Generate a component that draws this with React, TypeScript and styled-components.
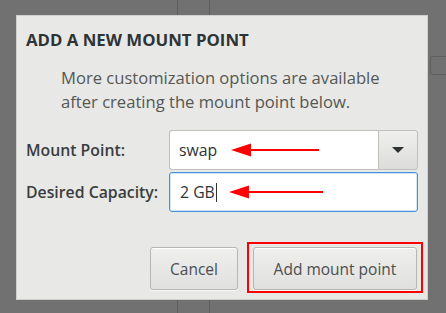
import React from "react";
import styled, { createGlobalStyle } from "styled-components";

const Global = createGlobalStyle`
  html, body { margin: 0; padding: 0; }
  body { width: 446px; height: 313px; overflow: hidden; font-family: "Open Sans", "DejaVu Sans", sans-serif; }
`;

const Backdrop = styled.div`
  position: relative;
  width: 446px;
  height: 313px;
  box-sizing: border-box;
  padding: 15px 18px 13px 16px;
  background-color: #717171;
  background-image:
    linear-gradient(#5f5f5f, #5f5f5f),
    linear-gradient(#5f5f5f, #5f5f5f);
  background-size: 1px 100%, 1px 100%;
  background-position: 177px 0, 209px 0;
  background-repeat: no-repeat;
  &::after {
    content: "";
    position: absolute;
    left: 430px;
    top: 56px;
    width: 30px;
    height: 17px;
    border: 1px solid #5e5e5e;
    border-radius: 3px;
  }
`;

const Dialog = styled.div`
  position: relative;
  z-index: 1;
  box-sizing: border-box;
  width: 412px;
  height: 285px;
  background: #e8e8e7;
  border: 1px solid #cfcfcd;
  padding: 12px 9px 0 9px;
  display: flex;
  flex-direction: column;
`;

const Title = styled.h1`
  margin: 0;
  font-family: "Open Sans", sans-serif;
  font-weight: 700;
  font-size: 16.8px;
  line-height: 24px;
  color: #2e3436;
`;

const Description = styled.p`
  margin: 14px 0 0 0;
  padding-left: 35px;
  font-size: 16.6px;
  line-height: 24px;
  color: #555753;
`;

const Form = styled.div`
  display: grid;
  grid-template-columns: 143px 1fr;
  row-gap: 2px;
  margin-top: 16px;
  align-items: center;
`;

const Label = styled.label`
  font-size: 15.8px;
  font-weight: 600;
  color: #3a3d3e;
`;

const Field = styled.div`
  position: relative;
  height: 40px;
  display: flex;
`;

const ComboEntry = styled.div`
  flex: 1;
  box-sizing: border-box;
  background: #ffffff;
  border: 1px solid #bfbfbc;
  border-right: none;
  border-radius: 3px 0 0 3px;
  padding-left: 9px;
  display: flex;
  align-items: center;
  font-size: 15.8px;
  color: #2e3436;
`;

const ComboButton = styled.div`
  width: 40px;
  box-sizing: border-box;
  border: 1px solid #bfbfbc;
  border-radius: 0 3px 3px 0;
  background: linear-gradient(#efefed, #dcdcda);
  display: flex;
  align-items: center;
  justify-content: center;
`;

const Entry = styled.div`
  flex: 1;
  box-sizing: border-box;
  background: #ffffff;
  border: 1px solid #4a90d9;
  box-shadow: inset 0 0 0 1px rgba(74, 144, 217, 0.25);
  border-radius: 3px;
  padding-left: 10px;
  display: flex;
  align-items: center;
  font-size: 15.8px;
  color: #2e3436;
`;

const Caret = styled.span`
  display: inline-block;
  width: 1px;
  height: 19px;
  background: #2e3436;
  margin-left: 1px;
`;

const Arrow = styled.svg`
  position: absolute;
  top: 12px;
  pointer-events: none;
`;

const Actions = styled.div`
  margin-top: auto;
  margin-bottom: 6px;
  display: flex;
  justify-content: flex-end;
  align-items: flex-start;
  gap: 9px;
`;

const Highlight = styled.div`
  border: 2px solid #ff0000;
  padding: 3px 4px 1px 4px;
  margin-right: -5px;
`;

const Button = styled.button<{ $w: number }>`
  width: ${(p) => p.$w}px;
  height: 43px;
  margin-top: ${(p) => (p.$w < 100 ? 5 : 0)}px;
  box-sizing: border-box;
  border: 1px solid #b6b6b3;
  border-radius: 3px;
  background: linear-gradient(#efefed, #e0e0de);
  box-shadow: inset 0 1px #ffffff, 0 1px rgba(255, 255, 255, 0.7);
  font-family: "Open Sans", sans-serif;
  font-size: 15.5px;
  color: #4b4f50;
  padding: 0;
`;

function RedArrow({ left, width }: { left: number; width: number }) {
  return (
    <Arrow style={{ left }} width={width} height={16} viewBox={`0 0 ${width} 16`}>
      <line x1={14} y1={8} x2={width} y2={8} stroke="#ff0000" strokeWidth={2} />
      <polygon points={`0,8 20,1.5 20,14.5`} fill="#ff0000" />
    </Arrow>
  );
}

export default function App() {
  return (
    <>
      <Global />
      <Backdrop>
        <Dialog>
          <Title>ADD A NEW MOUNT POINT</Title>
          <Description>
            More customization options are available
            <br />
            after creating the mount point below.
          </Description>
          <Form>
            <Label>Mount Point:</Label>
            <Field>
              <ComboEntry>swap</ComboEntry>
              <ComboButton>
                <svg width="12" height="7" viewBox="0 0 12 7">
                  <polygon points="0,0 12,0 6,6" fill="#2e3436" />
                </svg>
              </ComboButton>
              <RedArrow left={62} width={88} />
            </Field>
            <Label>Desired Capacity:</Label>
            <Field>
              <Entry>
                2 GB<Caret />
              </Entry>
              <RedArrow left={60} width={94} />
            </Field>
          </Form>
          <Actions>
            <Button $w={88}>Cancel</Button>
            <Highlight>
              <Button $w={164}>Add mount point</Button>
            </Highlight>
          </Actions>
        </Dialog>
      </Backdrop>
    </>
  );
}
